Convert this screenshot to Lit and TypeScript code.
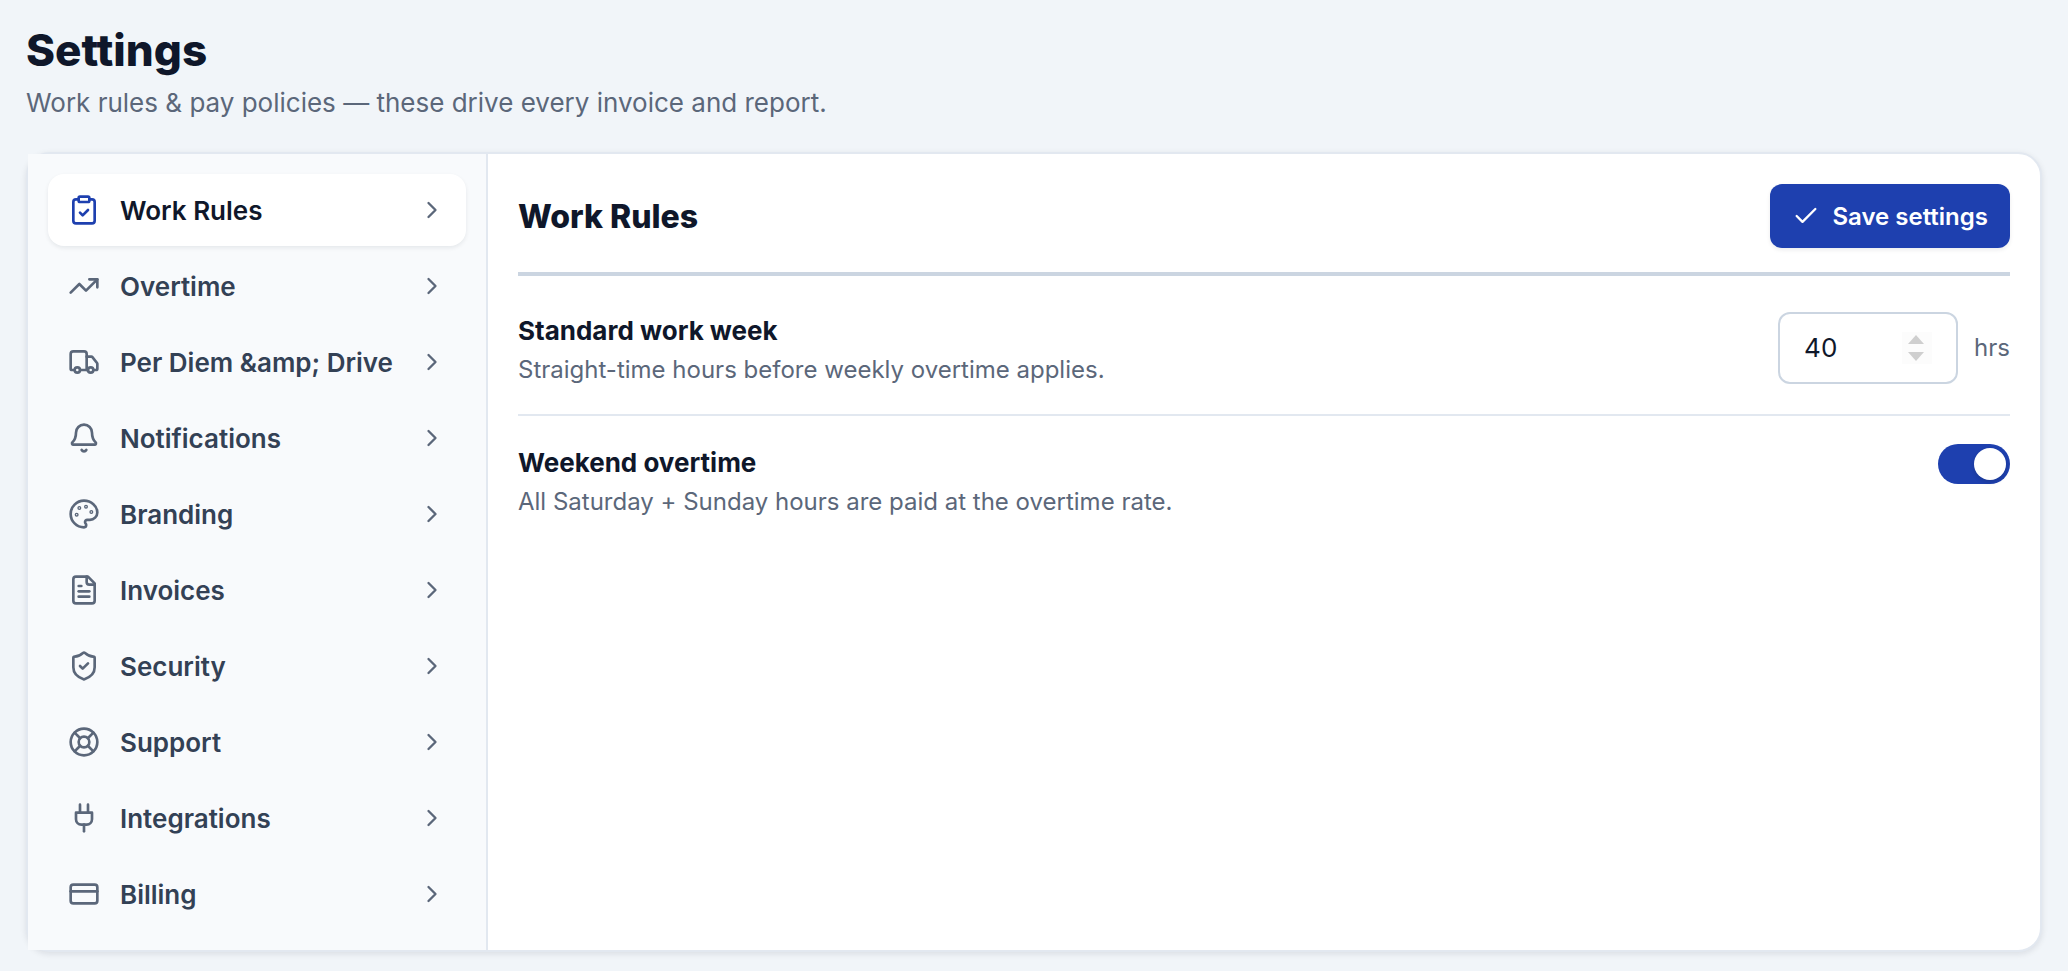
import { LitElement, html, css, svg, type SVGTemplateResult } from "lit";
import { customElement, state } from "lit/decorators.js";

interface Section {
  label: string;
  icon: SVGTemplateResult;
}

const SECTIONS: Section[] = [
  {
    label: "Work Rules",
    icon: svg`<rect width="8" height="4" x="8" y="2" rx="1" ry="1"/><path d="M16 4h2a2 2 0 0 1 2 2v14a2 2 0 0 1-2 2H6a2 2 0 0 1-2-2V6a2 2 0 0 1 2-2h2"/><path d="m9 14 2 2 4-4"/>`,
  },
  {
    label: "Overtime",
    icon: svg`<path d="M16 7h6v6"/><path d="m22 7-8.5 8.5-5-5L2 17"/>`,
  },
  {
    label: "Per Diem &amp; Drive",
    icon: svg`<path d="M14 18V6a2 2 0 0 0-2-2H4a2 2 0 0 0-2 2v11a1 1 0 0 0 1 1h2"/><path d="M15 18H9"/><path d="M19 18h2a1 1 0 0 0 1-1v-3.65a1 1 0 0 0-.22-.624l-3.48-4.35A1 1 0 0 0 17.52 8H14"/><circle cx="17" cy="18" r="2"/><circle cx="7" cy="18" r="2"/>`,
  },
  {
    label: "Notifications",
    icon: svg`<path d="M10.268 21a2 2 0 0 0 3.464 0"/><path d="M3.262 15.326A1 1 0 0 0 4 17h16a1 1 0 0 0 .74-1.673C19.41 13.956 18 12.499 18 8A6 6 0 0 0 6 8c0 4.499-1.411 5.956-2.738 7.326"/>`,
  },
  {
    label: "Branding",
    icon: svg`<circle cx="13.5" cy="6.5" r=".5"/><circle cx="17.5" cy="10.5" r=".5"/><circle cx="8.5" cy="7.5" r=".5"/><circle cx="6.5" cy="12.5" r=".5"/><path d="M12 2C6.5 2 2 6.5 2 12s4.5 10 10 10c.926 0 1.648-.746 1.648-1.688 0-.437-.18-.835-.437-1.125-.29-.289-.438-.652-.438-1.125a1.64 1.64 0 0 1 1.668-1.668h1.996c3.051 0 5.555-2.503 5.555-5.554C21.965 6.012 17.461 2 12 2z"/>`,
  },
  {
    label: "Invoices",
    icon: svg`<path d="M15 2H6a2 2 0 0 0-2 2v16a2 2 0 0 0 2 2h12a2 2 0 0 0 2-2V7Z"/><path d="M14 2v4a2 2 0 0 0 2 2h4"/><path d="M10 9H8"/><path d="M16 13H8"/><path d="M16 17H8"/>`,
  },
  {
    label: "Security",
    icon: svg`<path d="M20 13c0 5-3.5 7.5-7.66 8.95a1 1 0 0 1-.67-.01C7.5 20.5 4 18 4 13V6a1 1 0 0 1 1-1c2 0 4.5-1.2 6.24-2.72a1.17 1.17 0 0 1 1.52 0C14.51 3.81 17 5 19 5a1 1 0 0 1 1 1z"/><path d="m9 12 2 2 4-4"/>`,
  },
  {
    label: "Support",
    icon: svg`<circle cx="12" cy="12" r="10"/><path d="m4.93 4.93 4.24 4.24"/><path d="m14.83 9.17 4.24-4.24"/><path d="m14.83 14.83 4.24 4.24"/><path d="m9.17 14.83-4.24 4.24"/><circle cx="12" cy="12" r="4"/>`,
  },
  {
    label: "Integrations",
    icon: svg`<path d="M12 22v-5"/><path d="M9 8V2"/><path d="M15 8V2"/><path d="M18 8v5a4 4 0 0 1-4 4h-4a4 4 0 0 1-4-4V8Z"/>`,
  },
  {
    label: "Billing",
    icon: svg`<rect width="20" height="14" x="2" y="5" rx="2"/><path d="M2 10h20"/>`,
  },
];

const icon = (shape: SVGTemplateResult, cls: string) => html`
  <svg class="icon ${cls}" viewBox="0 0 24 24" aria-hidden="true">${shape}</svg>
`;

@customElement("app-root")
export class AppRoot extends LitElement {
  @state() private active = 0;
  @state() private hours = 40;

  static styles = css`
    :host {
      display: block;
      box-sizing: border-box;
      min-height: 100vh;
      padding: 20px 26px;
      background: #f1f5f9;
      color: #0f172a;
      font-family: Inter, "Liberation Sans", sans-serif;
      font-variant-ligatures: none;
    }
    *, *::before {
      box-sizing: border-box;
    }
    h1, h2, h3, p {
      margin: 0;
    }
    button, input {
      font: inherit;
      color: inherit;
    }
    .icon {
      display: block;
      flex: none;
      fill: none;
      stroke: currentColor;
      stroke-width: 2;
      stroke-linecap: round;
      stroke-linejoin: round;
    }
    .large {
      width: 32px;
      height: 32px;
    }
    .small {
      width: 28px;
      height: 28px;
    }
    .page-title {
      font-size: 44px;
      line-height: 60px;
      font-weight: 800;
    }
    .page-note {
      margin-top: 4px;
      font-size: 26px;
      line-height: 38px;
      color: #5b677a;
    }
    .card {
      display: grid;
      grid-template-columns: 460px minmax(0, 1fr);
      margin-top: 30px;
      background: #fff;
      border: 2px solid #e2e8f0;
      border-radius: 24px;
      box-shadow: 0 2px 6px rgba(15, 23, 42, 0.1);
    }
    .sections {
      display: flex;
      flex-direction: column;
      gap: 4px;
      padding: 20px;
      background: #f8fafc;
      border-right: 2px solid #e2e8f0;
    }
    .section {
      display: flex;
      align-items: center;
      gap: 20px;
      height: 72px;
      padding: 0 20px;
      border: 0;
      border-radius: 16px;
      background: none;
      color: #5b677a;
      cursor: pointer;
      text-align: left;
    }
    .section-label, .save-label, .panel-title {
      padding-top: 2px;
    }
    .section-label {
      flex: 1;
      font-size: 26px;
      line-height: 38px;
      font-weight: 600;
      color: #334155;
      white-space: nowrap;
    }
    .section.active {
      background: #fff;
      box-shadow: 0 2px 4px rgba(15, 23, 42, 0.08);
    }
    .active .large {
      color: #1e40af;
    }
    .active .section-label {
      color: #0f172a;
    }
    .panel {
      padding: 30px;
    }
    .panel-head {
      display: flex;
      align-items: center;
      justify-content: space-between;
      padding-bottom: 24px;
      margin-bottom: 8px;
      border-bottom: 4px solid #cbd5e1;
    }
    .panel-title {
      font-size: 32px;
      line-height: 44px;
      font-weight: 800;
    }
    .save {
      display: flex;
      align-items: center;
      gap: 12px;
      height: 64px;
      padding: 0 22px;
      border: 0;
      border-radius: 12px;
      background: #1e40af;
      color: #fff;
      font-size: 24px;
      line-height: 36px;
      font-weight: 600;
      cursor: pointer;
      box-shadow: 0 2px 4px rgba(15, 23, 42, 0.08);
    }
    .row {
      display: flex;
      align-items: flex-start;
      justify-content: space-between;
      gap: 32px;
      padding: 28px 0;
    }
    .row + .row {
      border-top: 2px solid #e2e8f0;
    }
    .row-title {
      display: block;
      font-size: 26px;
      line-height: 38px;
      font-weight: 700;
    }
    .row-note {
      margin-top: 4px;
      font-size: 24px;
      line-height: 32px;
      color: #5b677a;
    }
    .amount {
      display: flex;
      align-items: center;
      gap: 16px;
    }
    .stepper {
      display: flex;
      align-items: center;
      width: 180px;
      height: 72px;
      padding: 0 24px;
      background: #fff;
      border: 2px solid #cbd5e1;
      border-radius: 12px;
    }
    .number {
      flex: 1;
      min-width: 0;
      padding: 0;
      border: 0;
      outline: 0;
      background: none;
      appearance: textfield;
      font-size: 26px;
      line-height: 38px;
    }
    .number::-webkit-inner-spin-button {
      appearance: none;
      margin: 0;
    }
    .steps {
      display: flex;
      flex-direction: column;
      background: #fcfcfc;
    }
    .step {
      display: flex;
      align-items: center;
      justify-content: center;
      width: 30px;
      height: 16px;
      padding: 0 2px 0 0;
      border: 0;
      background: none;
      color: #cfcfcf;
    }
    .arrow {
      display: block;
      width: 16px;
      height: 10px;
      fill: currentColor;
    }
    .unit {
      font-size: 24px;
      line-height: 32px;
      color: #5b677a;
    }
    .toggle {
      flex: none;
      display: flex;
      appearance: none;
      width: 72px;
      height: 40px;
      margin: 0;
      padding: 4px;
      border-radius: 20px;
      background: #cbd5e1;
      cursor: pointer;
    }
    .toggle::before {
      content: "";
      width: 32px;
      height: 32px;
      border-radius: 50%;
      background: #fff;
      box-shadow: 0 2px 4px rgba(15, 23, 42, 0.2);
    }
    .toggle:checked {
      justify-content: flex-end;
      background: #1e40af;
    }
  `;

  render() {
    return html`
      <header>
        <h1 class="page-title">Settings</h1>
        <p class="page-note">Work rules & pay policies — these drive every invoice and report.</p>
      </header>
      <main class="card">
        <nav class="sections" aria-label="Settings sections">
          ${SECTIONS.map(
            (s, i) => html`
              <button class="section ${i === this.active ? "active" : ""}" @click=${() => (this.active = i)}>
                ${icon(s.icon, "large")}
                <span class="section-label">${s.label}</span>
                ${icon(svg`<path d="m9 18 6-6-6-6"/>`, "small")}
              </button>
            `,
          )}
        </nav>
        <section class="panel">
          <div class="panel-head">
            <h2 class="panel-title">Work Rules</h2>
            <button class="save">
              ${icon(svg`<path d="M20 6 9 17l-5-5"/>`, "small")}
              <span class="save-label">Save settings</span>
            </button>
          </div>
          <div class="row">
            <div>
              <label class="row-title" for="week">Standard work week</label>
              <p class="row-note">Straight-time hours before weekly overtime applies.</p>
            </div>
            <div class="amount">
              <div class="stepper">
                <input class="number" id="week" type="number" .value=${String(this.hours)}
                  @input=${(e: Event) => (this.hours = Number((e.target as HTMLInputElement).value))} />
                <div class="steps">
                  <button class="step" aria-label="Increase" @click=${() => this.hours++}>
                    <svg class="arrow" viewBox="0 0 16 10"><path d="M8 0l8 9H0z"/></svg>
                  </button>
                  <button class="step" aria-label="Decrease" @click=${() => this.hours--}>
                    <svg class="arrow" viewBox="0 0 16 10"><path d="M8 10L0 1h16z"/></svg>
                  </button>
                </div>
              </div>
              <span class="unit">hrs</span>
            </div>
          </div>
          <div class="row">
            <div>
              <label class="row-title" for="weekend">Weekend overtime</label>
              <p class="row-note">All Saturday + Sunday hours are paid at the overtime rate.</p>
            </div>
            <input class="toggle" id="weekend" type="checkbox" role="switch" checked />
          </div>
        </section>
      </main>
    `;
  }
}
